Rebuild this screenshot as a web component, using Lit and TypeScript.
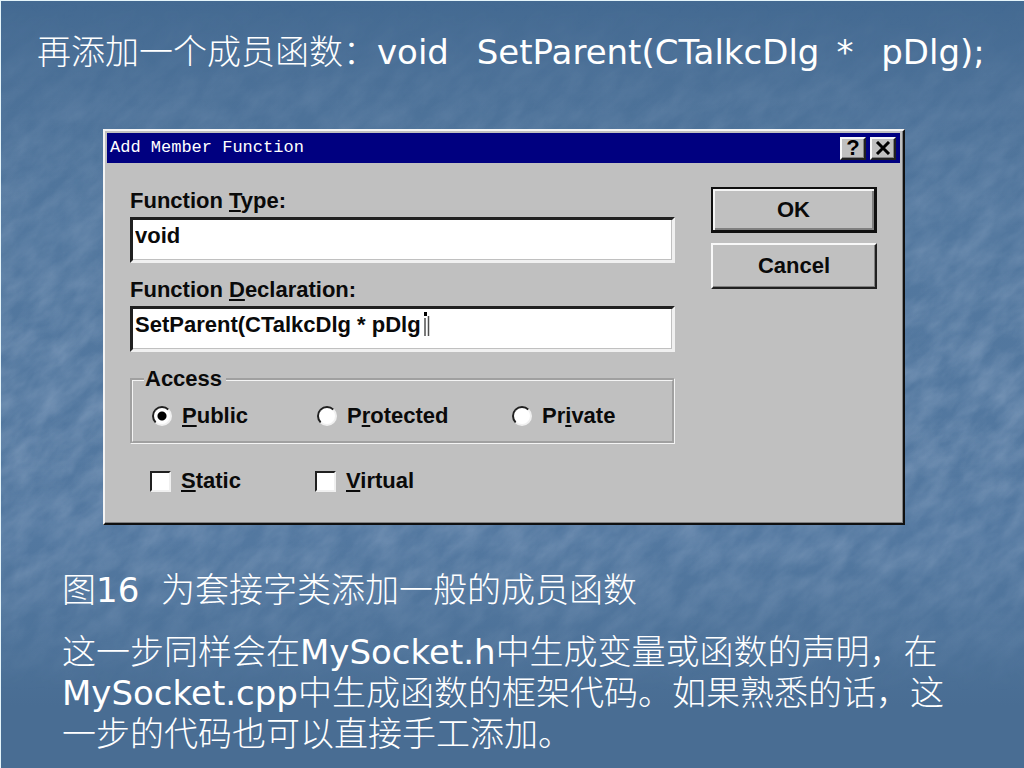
import { LitElement, html, css, svg } from "lit";
import { customElement, state } from "lit/decorators.js";

@customElement("member-dialog")
class MemberDialog extends LitElement {
  static styles = css`
    :host {
      display: block;
      font: bold 22px/24px "Liberation Sans", Arial, sans-serif;
      color: #0a0a0a;
    }
    .window {
      background: #c0c0c0;
      border: 2px solid;
      border-color: #f4f4f4 #101010 #101010 #f4f4f4;
      box-shadow: inset -1px -1px #808080;
      padding: 2px 3px 2px 2px;
    }
    .bar {
      display: flex;
      align-items: center;
      gap: 4px;
      height: 30px;
      padding: 0 4px 0 3px;
      background: #000080;
      color: #fff;
    }
    .name {
      flex: 1;
      margin: 0;
      font: 17px/24px "Liberation Mono", monospace;
    }
    button {
      font: inherit;
      color: inherit;
      background: #c0c0c0;
      border: 2px solid;
      border-color: #f8f8f8 #202020 #202020 #f8f8f8;
      box-shadow: inset -1px -1px #808080;
      padding: 0;
      border-radius: 0;
    }
    .tool {
      display: grid;
      place-items: center;
      width: 26px;
      height: 23px;
      color: #000;
      line-height: 18px;
    }
    .body {
      display: flex;
      justify-content: space-between;
      gap: 36px;
      padding: 24px 23px 28px 23px;
    }
    .form {
      flex: 1;
      min-width: 0;
      padding-top: 2px;
    }
    .field {
      position: relative;
      margin-bottom: 15px;
    }
    .field label {
      display: block;
      margin-bottom: 4px;
    }
    .field input {
      display: block;
      box-sizing: border-box;
      width: 100%;
      height: 46px;
      padding: 1px 1px 9px 2px;
      font: inherit;
      color: inherit;
      background: #fff;
      border: 3px solid;
      border-color: #202020 #f0f0f0 #f0f0f0 #202020;
      box-shadow: inset -1px -1px #c0c0c0;
      outline: 0;
      border-radius: 0;
    }
    .caret {
      position: absolute;
      left: 294px;
      top: 32px;
    }
    fieldset {
      margin: 0;
      min-width: 0;
      padding: 13px 0 13px 19px;
      border: 3px groove #f4f4f4;
    }
    legend {
      margin-left: -8px;
      padding: 0 4px 0 1px;
    }
    .options {
      display: grid;
      grid-template-columns: 165px 195px 1fr;
    }
    .extras {
      margin-top: 25px;
      padding-left: 20px;
    }
    .option {
      display: flex;
      align-items: center;
      gap: 10px;
    }
    .option input {
      appearance: none;
      box-sizing: border-box;
      width: 21px;
      height: 21px;
      margin: 0;
      background: #fff;
      border: 2px solid;
      border-color: #202020 #f0f0f0 #f0f0f0 #202020;
    }
    .option input[type="radio"] {
      width: 20px;
      height: 20px;
      border-radius: 50%;
    }
    .option input[type="radio"]:checked {
      background: radial-gradient(circle, #000 4px, #fff 5px);
    }
    u {
      text-decoration-thickness: 2px;
      text-underline-offset: 2px;
      text-decoration-skip-ink: none;
    }
    .actions {
      display: flex;
      flex-direction: column;
      gap: 10px;
      width: 166px;
    }
    .actions button {
      height: 46px;
    }
    .actions .default {
      border-width: 2px 3px 3px 2px;
      border-color: #101010;
      box-shadow: inset 2px 2px #f4f4f4, inset -2px -2px #808080;
    }
  `;

  @state() private access = "Public";

  private radio(before: string, key: string, after: string) {
    const id = before + key + after;
    return html`<label class="option"
      ><input
        type="radio"
        name="access"
        .checked=${this.access === id}
        @change=${() => (this.access = id)}
      /><span>${before}<u>${key}</u>${after}</span></label
    >`;
  }

  render() {
    return html`
      <section class="window" role="dialog" aria-labelledby="name">
        <header class="bar">
          <h2 class="name" id="name">Add Member Function</h2>
          <button class="tool" type="button">?</button>
          <button class="tool" type="button" aria-label="Close">
            <svg width="16" height="14" viewBox="0 0 16 14">
              <path d="M2 1L14 13M14 1L2 13" stroke="#000" stroke-width="3" />
            </svg>
          </button>
        </header>
        <div class="body">
          <form class="form">
            <div class="field">
              <label for="type">Function <u>T</u>ype:</label>
              <input id="type" value="void" />
            </div>
            <div class="field">
              <label for="decl">Function <u>D</u>eclaration:</label>
              <input id="decl" value="SetParent(CTalkcDlg * pDlg" />
              <svg class="caret" width="6" height="27" viewBox="0 0 6 27">
                <path d="M0 2H3V6H0Z" fill="#000" />
                <path d="M1 8V26M4.5 6V26" stroke="#505050" stroke-width="1.5" />
              </svg>
            </div>
            <fieldset>
              <legend>Access</legend>
              <div class="options">
                ${this.radio("", "P", "ublic")} ${this.radio("P", "r", "otected")}
                ${this.radio("Pr", "i", "vate")}
              </div>
            </fieldset>
            <div class="options extras">
              <label class="option"
                ><input type="checkbox" /><span><u>S</u>tatic</span></label
              >
              <label class="option"
                ><input type="checkbox" /><span><u>V</u>irtual</span></label
              >
            </div>
          </form>
          <div class="actions">
            <button class="default" type="button">OK</button>
            <button type="button">Cancel</button>
          </div>
        </div>
      </section>
    `;
  }
}

@customElement("app-root")
class AppRoot extends LitElement {
  static styles = css`
    :host {
      display: block;
    }
    .slide {
      position: relative;
      box-sizing: border-box;
      min-height: 100vh;
      overflow: hidden;
      isolation: isolate;
      padding: 28px 24px 12px 36px;
      border: solid #e4f4fa;
      border-width: 1px 0 0 1px;
      background: linear-gradient(
        #446a92 0%,
        #4c7198 12%,
        #52779e 30%,
        #5378a0 70%,
        #4d7299 84%,
        #496d93 92%,
        #496d93 100%
      );
      color: #fff;
      font: 300 34px/41px "Noto Sans CJK SC", sans-serif;
    }
    .texture {
      position: absolute;
      inset: 0;
      width: 100%;
      height: 100%;
      z-index: -1;
    }
    .latin {
      font-family: "DejaVu Sans", Verdana, sans-serif;
      font-weight: 400;
      line-height: 34px;
      white-space: pre-wrap;
    }
    h1,
    p {
      margin: 0;
      font-size: inherit;
      font-weight: inherit;
    }
    member-dialog {
      max-width: 803px;
      margin: 59px 95px 42px 66px;
    }
    .notes {
      display: flex;
      flex-direction: column;
      gap: 21px;
      padding: 0 36px 0 25px;
    }
  `;

  render() {
    return html`
      <main class="slide">
        <svg class="texture" aria-hidden="true">
          ${svg`
            <defs>
              <filter id="stone" x="0" y="0" width="100%" height="100%">
                <feTurbulence type="fractalNoise" baseFrequency="0.03 0.06" numOctaves="4" seed="8" />
                <feColorMatrix values="0 0 0 0 0.48  0 0 0 0 0.58  0 0 0 0 0.74  0.5 0 0 0 -0.12" />
              </filter>
              <linearGradient id="fade" x2="0" y2="1">
                <stop offset="0" stop-color="#000" />
                <stop offset="0.2" stop-color="#888" />
                <stop offset="0.5" stop-color="#fff" />
                <stop offset="0.75" stop-color="#bbb" />
                <stop offset="0.9" stop-color="#000" />
              </linearGradient>
              <mask id="band"><rect width="100%" height="100%" fill="url(#fade)" /></mask>
            </defs>
            <g mask="url(#band)">
              <g transform="rotate(-40)">
                <rect x="-60%" y="-10%" width="180%" height="200%" filter="url(#stone)" />
              </g>
            </g>`}
        </svg>
        <h1>再添加一个成员函数：<span class="latin">void &ensp;SetParent(CTalkcDlg&ensp;* &ensp;pDlg);</span></h1>
        <member-dialog></member-dialog>
        <div class="notes">
          <p>图<span class="latin">16  </span>为套接字类添加一般的成员函数</p>
          <p>
            这一步同样会在<span class="latin">MySocket.h</span>中生成变量或函数的声明，在<span class="latin">MySocket.cpp</span>中生成函数的框架代码。如果熟悉的话，这一步的代码也可以直接手工添加。
          </p>
        </div>
      </main>
    `;
  }
}
